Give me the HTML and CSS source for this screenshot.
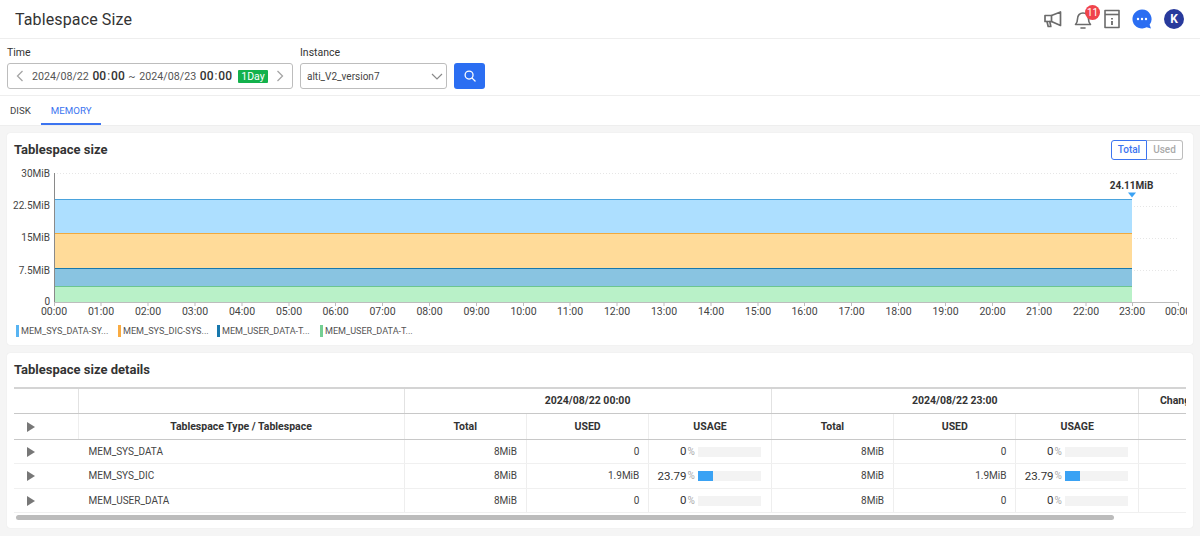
FILE: index.html
```html
<!DOCTYPE html>
<html lang="en">
<head>
<meta charset="utf-8">
<title>Tablespace Size</title>
<link rel="stylesheet" href="styles.css">
</head>
<body>
<header class="topbar">
  <h1 class="page-title">Tablespace Size</h1>
  <div class="top-icons">
    <svg class="ico" width="20" height="20" viewBox="0 0 20 20" fill="none" stroke="#6b6b6b" stroke-width="1.7" stroke-linejoin="round" stroke-linecap="round"><path d="M2 6.5h6.5L17.500 3v13.500L8.500 12.500H2z"/><path d="M8.500 6.500v6"/><path d="M4 12.500l1.200 5h2.600l-1-5"/></svg>
    <span class="bell">
      <svg width="20" height="22" viewBox="0 0 20 22" fill="none" stroke="#6b6b6b" stroke-width="1.6" stroke-linecap="round" stroke-linejoin="round"><path d="M2.500 16.500c1.600-1.600 2-3 2-5.500 0-3.600 2.300-6 5.500-6s5.500 2.400 5.500 6c0 2.500.4 3.900 2 5.500z"/><path d="M8 20h4"/></svg>
      <span class="badge">11</span>
    </span>
    <svg class="ico" width="18" height="20" viewBox="0 0 18 20" fill="none" stroke="#6b6b6b" stroke-width="1.6" stroke-linejoin="round"><path d="M2 1.500h14v17H2z"/><path d="M2 5.500h14"/><path d="M9 9v1.600M9 12v4" stroke-width="1.800"/></svg>
    <svg class="ico bubble" width="20" height="20" viewBox="0 0 20 20"><path d="M10 0.500a9.500 9.500 0 1 0 4.600 17.800l4.400 1.200-1.400-3.800A9.500 9.500 0 0 0 10 .5z" fill="#2b6ef2"/><circle cx="6" cy="10" r="1.200" fill="#fff"/><circle cx="10" cy="10" r="1.200" fill="#fff"/><circle cx="14" cy="10" r="1.200" fill="#fff"/></svg>
    <span class="avatar">K</span>
  </div>
</header>

<section class="filters">
  <div class="field">
    <label class="field-label">Time</label>
    <div class="date-box">
      <svg width="8" height="12" viewBox="0 0 8 12" fill="none" stroke="#a5a5a5" stroke-width="1.300"><path d="M6.500 1L1.500 6l5 5"/></svg>
      <span class="date-text">2024/08/22 <b class="time">00<i>:</i>00</b> ~ 2024/08/23 <b class="time">00<i>:</i>00</b></span>
      <span class="day-tag">1Day</span>
      <svg width="8" height="12" viewBox="0 0 8 12" fill="none" stroke="#a5a5a5" stroke-width="1.300"><path d="M1.500 1l5 5-5 5"/></svg>
    </div>
  </div>
  <div class="field">
    <label class="field-label">Instance</label>
    <div class="select-box">
      <span>alti_V2_version7</span>
      <svg width="12" height="7" viewBox="0 0 12 7" fill="none" stroke="#8a8a8a" stroke-width="1.200"><path d="M1 1l5 5 5-5"/></svg>
    </div>
  </div>
  <button class="search-btn" type="button" aria-label="Search">
    <svg width="12" height="12" viewBox="0 0 13 13" fill="none" stroke="#fff" stroke-width="1.400" stroke-linecap="round"><circle cx="5.500" cy="5.500" r="4.300"/><path d="M8.800 8.800L12 12"/></svg>
  </button>
</section>

<nav class="tabs">
  <span class="tab">DISK</span>
  <span class="tab active">MEMORY</span>
</nav>

<main class="content">
  <section class="card chart-card">
    <div class="card-head">
      <h2 class="card-title">Tablespace size</h2>
      <div class="toggle"><span class="toggle-on">Total</span><span class="toggle-off">Used</span></div>
    </div>
    <svg class="chart" width="1180" height="156" viewBox="7 167 1180 156">
      <g stroke="#e6e6e6" stroke-dasharray="1 2"><path d="M54 173.500H1178M54 206.500H1178M54 238.500H1178M54 270.500H1178"/></g>
      <rect x="54" y="199" width="1078" height="35" fill="#addfff"/>
      <rect x="54" y="233.500" width="1078" height="35" fill="#ffdb99"/>
      <rect x="54" y="268" width="1078" height="18" fill="#89c4e1"/>
      <rect x="54" y="286" width="1078" height="16" fill="#b9f1c8"/>
      <path d="M54 199.500H1132" stroke="#4aa3dd"/>
      <path d="M54 233.500H1132" stroke="#f0a93f"/>
      <path d="M54 268.500H1132" stroke="#1878ad"/>
      <path d="M54 286.500H1132" stroke="#6cc590"/>
      <path d="M54.500 173V302" stroke="#8a8a8a"/>
      <path d="M54 302.500H1178" stroke="#bdbdbd"/>
      <path d="M54.500 302v4M101 302v4M148 302v4M195 302v4M242 302v4M289 302v4M335.500 302v4M382.500 302v4M429.500 302v4M476.500 302v4M523.500 302v4M570 302v4M617 302v4M664 302v4M711 302v4M758 302v4M804.500 302v4M851.500 302v4M898.500 302v4M945.500 302v4M992.500 302v4M1039 302v4M1086 302v4M1132.500 302v4M1178.500 302v4" stroke="#bdbdbd"/>
      <path d="M1128 192.500h8l-4 5z" fill="#3aa2f4"/>
      <text class="peak" x="1131.500" y="189" text-anchor="middle">24.11MiB</text>
      <g class="y-labels" text-anchor="end">
        <text x="50" y="177">30MiB</text>
        <text x="50" y="209">22.5MiB</text>
        <text x="50" y="241">15MiB</text>
        <text x="50" y="274">7.5MiB</text>
        <text x="50" y="305">0</text>
      </g>
      <g class="x-labels" text-anchor="middle">
        <text x="54" y="315">00:00</text><text x="101" y="315">01:00</text><text x="148" y="315">02:00</text><text x="195" y="315">03:00</text><text x="242" y="315">04:00</text><text x="289" y="315">05:00</text><text x="335.500" y="315">06:00</text><text x="382.500" y="315">07:00</text><text x="429.500" y="315">08:00</text><text x="476.500" y="315">09:00</text><text x="523.500" y="315">10:00</text><text x="570" y="315">11:00</text><text x="617" y="315">12:00</text><text x="664" y="315">13:00</text><text x="711" y="315">14:00</text><text x="758" y="315">15:00</text><text x="804.500" y="315">16:00</text><text x="851.500" y="315">17:00</text><text x="898.500" y="315">18:00</text><text x="945.500" y="315">19:00</text><text x="992.500" y="315">20:00</text><text x="1039" y="315">21:00</text><text x="1086" y="315">22:00</text><text x="1132" y="315">23:00</text><text x="1178" y="315">00:00</text>
      </g>
    </svg>
    <ul class="legend">
      <li class="legend-item c1">MEM_SYS_DATA-SY...</li>
      <li class="legend-item c2">MEM_SYS_DIC-SYS...</li>
      <li class="legend-item c3">MEM_USER_DATA-T...</li>
      <li class="legend-item c4">MEM_USER_DATA-T...</li>
    </ul>
  </section>

  <section class="card table-card">
    <h2 class="card-title details-title">Tablespace size details</h2>
    <div class="table-wrap">
      <table class="grid">
        <colgroup>
          <col class="w-exp"><col class="w-name"><col class="w-a"><col class="w-a"><col class="w-a"><col class="w-a"><col class="w-a"><col class="w-a"><col class="w-a">
        </colgroup>
        <thead>
          <tr class="group-row">
            <th></th><th></th>
            <th colspan="3">2024/08/22 00:00</th>
            <th colspan="3">2024/08/22 23:00</th>
            <th class="change">Change</th>
          </tr>
          <tr class="head-row">
            <th class="exp"><span class="tri"></span></th>
            <th>Tablespace Type / Tablespace</th>
            <th>Total</th><th>USED</th><th>USAGE</th>
            <th>Total</th><th>USED</th><th>USAGE</th>
            <th></th>
          </tr>
        </thead>
        <tbody>
          <tr>
            <td class="exp"><span class="tri"></span></td><td class="name">MEM_SYS_DATA</td>
            <td class="num">8MiB</td><td class="num">0</td>
            <td><div class="usage"><span class="pct">0</span><span class="unit">%</span><span class="track"><span class="fill" style="width:0%"></span></span></div></td>
            <td class="num">8MiB</td><td class="num">0</td>
            <td><div class="usage"><span class="pct">0</span><span class="unit">%</span><span class="track"><span class="fill" style="width:0%"></span></span></div></td>
            <td></td>
          </tr>
          <tr>
            <td class="exp"><span class="tri"></span></td><td class="name">MEM_SYS_DIC</td>
            <td class="num">8MiB</td><td class="num">1.9MiB</td>
            <td><div class="usage"><span class="pct">23.79</span><span class="unit">%</span><span class="track"><span class="fill" style="width:23.79%"></span></span></div></td>
            <td class="num">8MiB</td><td class="num">1.9MiB</td>
            <td><div class="usage"><span class="pct">23.79</span><span class="unit">%</span><span class="track"><span class="fill" style="width:23.79%"></span></span></div></td>
            <td></td>
          </tr>
          <tr>
            <td class="exp"><span class="tri"></span></td><td class="name">MEM_USER_DATA</td>
            <td class="num">8MiB</td><td class="num">0</td>
            <td><div class="usage"><span class="pct">0</span><span class="unit">%</span><span class="track"><span class="fill" style="width:0%"></span></span></div></td>
            <td class="num">8MiB</td><td class="num">0</td>
            <td><div class="usage"><span class="pct">0</span><span class="unit">%</span><span class="track"><span class="fill" style="width:0%"></span></span></div></td>
            <td></td>
          </tr>
        </tbody>
      </table>
    </div>
    <div class="scroll-track"><div class="scroll-thumb"></div></div>
  </section>
</main>
</body>
</html>
```

FILE: styles.css
```css
* { box-sizing: border-box; }
html, body { margin: 0; height: 100%; }
body {
  width: 1200px;
  height: 536px;
  overflow: hidden;
  background: #f5f5f5;
  font-family: Roboto, "Liberation Sans", sans-serif;
  color: #333;
}
.topbar {
  height: 39px;
  background: #fff;
  border-bottom: 1px solid #eee;
  display: flex;
  align-items: center;
  justify-content: space-between;
  padding: 0 16px 0 15px;
}
.page-title { margin: 0; font-size: 16px; font-weight: 400; letter-spacing: .12px; color: #333; }
.top-icons { display: flex; align-items: center; gap: 10px; }
.ico { display: block; }
.bubble { margin-left: 1px; }
.bell { position: relative; display: block; width: 20px; height: 22px; }
.bell svg { display: block; }
.badge {
  position: absolute; left: 12px; top: -3px;
  width: 15px; height: 15px; border-radius: 50%;
  background: #f0444b; color: #fff;
  font-size: 10px; line-height: 15px; text-align: center;
}
.avatar {
  width: 20px; height: 20px; border-radius: 50%;
  background: #283a9c; color: #fff;
  font-size: 12px; font-weight: 700; line-height: 20px; text-align: center;
  margin-left: 2px;
}
.filters {
  height: 57px;
  background: #fff;
  border-bottom: 1px solid #eee;
  display: flex;
  align-items: flex-end;
  padding: 0 0 6px 7px;
  gap: 7px;
}
.field { display: flex; flex-direction: column; gap: 3px; }
.field-label { font-size: 10.500px; line-height: 14px; color: #333; }
.date-box, .select-box {
  height: 26px;
  background: #fff;
  border: 1px solid #bdbdbd;
  border-radius: 3px;
  display: flex;
  align-items: center;
}
.date-box { width: 286px; padding: 0 8px; }
.date-text { margin-left: 8px; font-size: 10.700px; word-spacing: 1px; color: #555; white-space: pre; }
.time { font-size: 12px; font-weight: 500; color: #333; }
.time i { font-style: normal; font-weight: 400; margin: 0 1px; color: #555; }
.day-tag {
  margin-left: 6px; margin-right: 8px;
  width: 30px; height: 13px;
  background: #12b14c; color: #fff;
  border-radius: 1px;
  font-size: 10.500px; line-height: 13px; text-align: center;
}
.select-box { width: 147px; padding: 0 3px 0 6px; justify-content: space-between; font-size: 10px; color: #444; }
.search-btn {
  width: 31px; height: 26px; padding: 0;
  border: 0; border-radius: 3px;
  background: #2b6ef2;
  display: flex; align-items: center; justify-content: center;
}
.tabs {
  height: 30px;
  background: #fff;
  border-bottom: 1px solid #eee;
  display: flex;
}
.tab {
  height: 29px;
  font-size: 9.700px; line-height: 29px; color: #444;
  padding: 0 10px;
}
.tab.active { color: #3c74f0; border-bottom: 2px solid #3c74f0; }
.content {
  padding: 7px 7px 0;
  display: flex;
  flex-direction: column;
  gap: 8px;
}
.card {
  background: #fff;
  border-radius: 3px;
  box-shadow: 0 0 1px rgba(0,0,0,.12);
}
.chart-card { height: 212px; }
.card-head {
  height: 34px;
  display: flex;
  justify-content: space-between;
  align-items: flex-start;
  padding: 7px 10px 0 7px;
}
.card-title { margin: 0; font-size: 13px; font-weight: 700; color: #333; line-height: 20px; }
.toggle { display: flex; height: 20px; font-size: 10px; line-height: 18px; font-weight: 500; text-align: center; }
.toggle-on { width: 36px; border: 1px solid #3c74f0; border-radius: 3px 0 0 3px; color: #3c74f0; }
.toggle-off { width: 36px; border: 1px solid #bdbdbd; border-left: 0; border-radius: 0 3px 3px 0; color: #aaa; }
.chart { display: block; }
.chart text { font-family: Roboto, "Liberation Sans", sans-serif; }
.y-labels { font-size: 10px; fill: #444; }
.x-labels { font-size: 10.500px; fill: #444; }
.peak { font-size: 10px; font-weight: 700; fill: #333; }
.legend {
  list-style: none;
  margin: 0;
  padding: 2px 0 0 9px;
  display: flex;
}
.legend-item {
  font-size: 9.100px;
  line-height: 12px;
  color: #555;
  border-left: 3px solid #000;
  padding-left: 2px;
}
.legend-item.c1 { border-color: #58b4f2; width: 102px; }
.legend-item.c2 { border-color: #f9ab42; width: 99px; }
.legend-item.c3 { border-color: #1878ad; width: 103px; }
.legend-item.c4 { border-color: #74cf93; }
.table-card { height: 175px; padding: 7px 7px 0; }
.details-title { height: 28px; }
.table-wrap { overflow: hidden; width: 1172px; margin-top: -1px; }
.grid {
  table-layout: fixed;
  border-collapse: collapse;
  width: 1246.800px;
  font-size: 10px;
  color: #444;
}
.w-exp { width: 64px; }
.w-name { width: 326px; }
.w-a { width: 122.400px; }
.grid th { font-weight: 700; font-size: 10.500px; color: #333; text-align: center; padding: 0; border-right: 1px solid #eee; }
.group-row th { height: 25px; border-top: 2px solid #d4d4d4; border-bottom: 1px solid #c8c8c8; border-right-color: #e2e2e2; }
.head-row th { height: 26px; border-bottom: 1px solid #c8c8c8; }
.grid td { height: 24.500px; padding: 0; border-bottom: 1px solid #f0f0f0; border-right: 1px solid #eee; }
.grid td.exp { border-right-color: #fff; }
.grid .exp { text-align: left; padding-left: 13px; }
.grid th.change { text-align: left; padding-left: 21px; }
.grid td.name { padding-left: 10px; }
.grid td.num { text-align: right; padding-right: 9px; }
.tri {
  display: inline-block;
  width: 0; height: 0;
  border-left: 8px solid #777;
  border-top: 5px solid transparent;
  border-bottom: 5px solid transparent;
  vertical-align: middle;
}
.usage { display: flex; align-items: center; justify-content: flex-end; padding-right: 10px; }
.pct { font-size: 11.500px; color: #333; }
.unit { font-size: 10px; color: #aaa; margin: 0 3px 0 1px; }
.track { display: block; width: 63px; height: 10px; background: #f3f3f3; margin-top: 1px; }
.fill { display: block; height: 10px; background: #3aa2f4; }
.scroll-track { height: 5px; margin-top: 2px; padding-left: 2px; }
.scroll-thumb { width: 1098px; height: 5px; background: #bcbcbc; border-radius: 3px; }
```
